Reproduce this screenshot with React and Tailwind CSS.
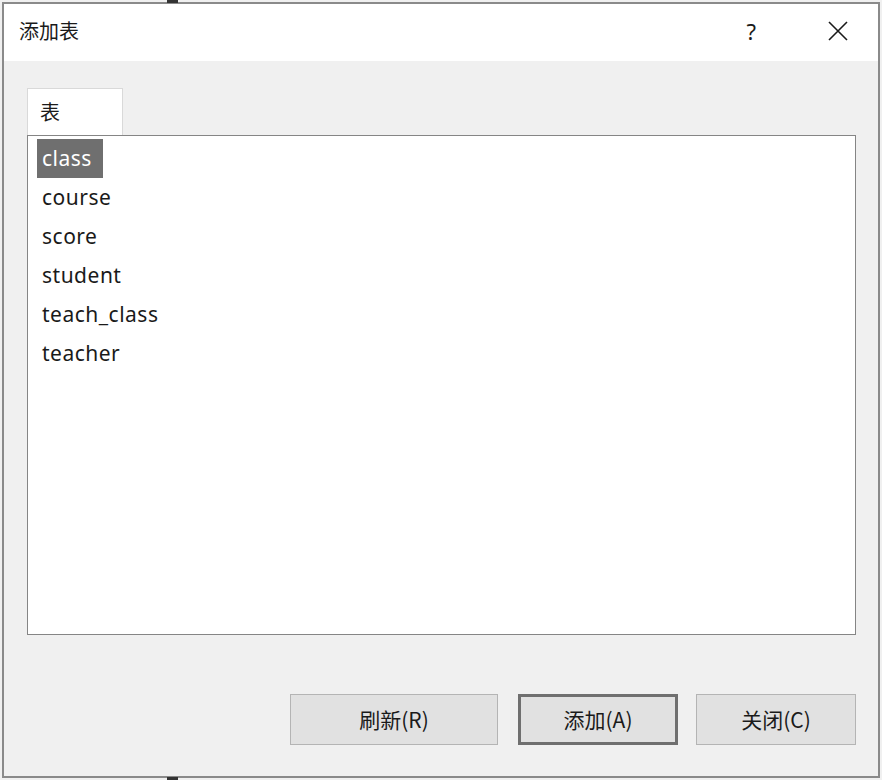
import React from "react";

const tables = ["class", "course", "score", "student", "teach_class", "teacher"];

const font = { fontFamily: '"Noto Sans CJK SC", "Noto Sans", sans-serif' };
const latin = { fontFamily: '"Noto Sans", "Noto Sans CJK SC", sans-serif' };

function Btn({ label, w, primary }) {
  return (
    <button
      className={
        "h-[51px] flex items-center justify-center bg-[#e1e1e1] text-[21px] text-[#1a1a1a] " +
        w +
        (primary ? " border-[3px] border-[#6f6f6f]" : " border border-[#b4b4b4]")
      }
    >
      {label}
    </button>
  );
}

export default function App() {
  return (
    <div className="relative w-[882px] h-[780px] bg-[#f0f0f0] p-[2px]" style={font}>
      <div className="absolute left-[167px] top-0 w-[11px] h-[3px] bg-[#333]" />
      <div className="absolute left-[167px] bottom-0 w-[11px] h-[3px] bg-[#333]" />
      <div className="h-full flex flex-col border-2 border-[#8a8a8a]">
        <div className="h-[57px] bg-white flex items-center pl-[15px] pr-[30px] pb-[3px]">
          <span className="text-[20px] text-[#1a1a1a]">添加表</span>
          <span className="ml-auto text-[22px] text-[#1a1a1a] mr-[72px]" style={latin}>?</span>
          <svg width="20" height="20" viewBox="0 0 20 20" className="text-[#1a1a1a]">
            <path d="M1 1 L19 19 M19 1 L1 19" stroke="currentColor" strokeWidth="1.6" fill="none" />
          </svg>
        </div>
        <div className="flex-1 bg-[#f0f0f0] pl-[23px] pt-[27px]">
          <div className="w-[96px] h-[47px] bg-white border border-b-0 border-[#d9d9d9] flex items-center pl-[12px] text-[20px] text-[#1a1a1a]">
            表
          </div>
          <div className="w-[829px] h-[500px] bg-white border border-[#858585] pt-[3px] pl-[9px]" style={latin}>
            {tables.map((t, i) => (
              <div key={t} className="h-[39px] flex items-center">
                <span
                  className={
                    "h-[39px] flex items-center pl-[5px] pr-[11px] text-[21px] tracking-[0.5px] " +
                    (i === 0 ? "bg-[#6f6f6f] text-white" : "text-[#1a1a1a]")
                  }
                >
                  {t}
                </span>
              </div>
            ))}
          </div>
          <div className="w-[829px] flex justify-end mt-[59px]">
            <Btn label="刷新(R)" w="w-[208px]" />
            <div className="w-[20px]" />
            <Btn label="添加(A)" w="w-[160px]" primary />
            <div className="w-[18px]" />
            <Btn label="关闭(C)" w="w-[160px]" />
          </div>
        </div>
      </div>
    </div>
  );
}
